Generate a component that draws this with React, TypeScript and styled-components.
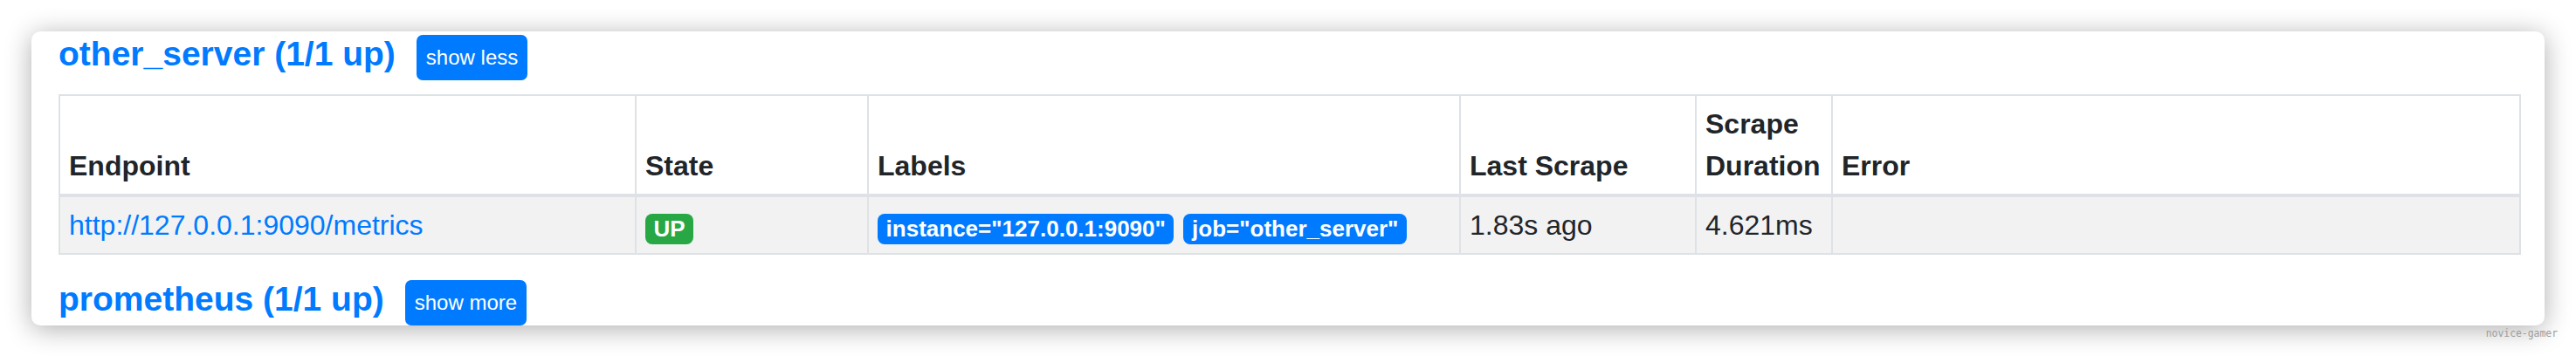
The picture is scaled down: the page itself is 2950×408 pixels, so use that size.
import React from 'react';
import styled, { createGlobalStyle } from 'styled-components';

type Target = {
  endpoint: string
  state: string
  labels: { [key: string]: string }
  lastScrape: string
  duration: string
  error: string
}

type Job = {
  name: string
  up: number
  total: number
  expanded: boolean
  targets: Target[]
}

const jobs: Job[] = [
  {
    name: 'other_server',
    up: 1,
    total: 1,
    expanded: true,
    targets: [
      {
        endpoint: 'http://127.0.0.1:9090/metrics',
        state: 'UP',
        labels: { instance: '127.0.0.1:9090', job: 'other_server' },
        lastScrape: '1.83s ago',
        duration: '4.621ms',
        error: '',
      },
    ],
  },
  { name: 'prometheus', up: 1, total: 1, expanded: false, targets: [] },
]

// column widths of the targets table, left to right
const columns = [
  { title: 'Endpoint', width: 660 },
  { title: 'State', width: 266 },
  { title: 'Labels', width: 678 },
  { title: 'Last Scrape', width: 270 },
  { title: 'Scrape Duration', width: 156 },
  { title: 'Error', width: 788 },
]

const GlobalStyle = createGlobalStyle`
  html, body {
    margin: 0;
    background: #fff;
  }
  body {
    font-family: "Liberation Sans", Arial, sans-serif;
  }
`

const Page = styled.div`
  width: 2950px;
  height: 408px;
  box-sizing: border-box;
  padding: 36px 36px 0;
  overflow: hidden;
`

const Card = styled.div`
  background: #fff;
  border-radius: 10px;
  box-shadow: 0 4px 30px rgba(0, 0, 0, 0.32);
  padding: 0 29px 0 31px;
  overflow: hidden;
`

const JobHeader = styled.div<{ $top: number }>`
  display: flex;
  align-items: flex-start;
  gap: 24px;
  margin-top: ${(p) => p.$top}px;
`

const JobTitle = styled.a`
  font-size: 39px;
  font-weight: 700;
  line-height: 52px;
  color: #007bff;
  text-decoration: none;
  white-space: nowrap;
`

const ToggleButton = styled.button`
  margin-top: 4px;
  height: 52px;
  padding: 0 11px;
  border: 0;
  border-radius: 7px;
  background: #007bff;
  color: #fff;
  font-family: inherit;
  font-size: 24px;
  line-height: 52px;
  cursor: pointer;
`

const Table = styled.table`
  width: 100%;
  margin-top: 16px;
  border-collapse: collapse;
  table-layout: fixed;
  color: #212529;
  font-size: 32px;
  line-height: 48px;
`

const Col = styled.col<{ $w: number }>`
  width: ${(p) => p.$w}px;
`

const Th = styled.th`
  text-align: left;
  vertical-align: bottom;
  padding: 8px 10px;
  border: 2px solid #dee2e6;
  border-bottom-width: 4px;
  font-weight: 700;
`

const Td = styled.td`
  vertical-align: top;
  padding: 8px 10px;
  border: 2px solid #dee2e6;
  background: #f2f2f2;
`

const Link = styled.a`
  color: #007bff;
  text-decoration: none;
`

const Badge = styled.span<{ $bg: string }>`
  display: inline-block;
  margin-right: 11px;
  padding: 4.5px 9.6px;
  border-radius: 8px;
  background: ${(p) => p.$bg};
  color: #fff;
  font-size: 26px;
  font-weight: 700;
  line-height: 1;
  white-space: nowrap;
  vertical-align: -2px;
`

const Watermark = styled.div`
  margin: 2px -15px 0 0;
  text-align: right;
  font-family: "DejaVu Sans Mono", monospace;
  font-size: 11.4px;
  line-height: 14px;
  color: #9c9c9c;
`

function TargetTable({ targets }: { targets: Target[] }) {
  return (
    <Table>
      <colgroup>
        {columns.map((c) => <Col key={c.title} $w={c.width} />)}
      </colgroup>
      <thead>
        <tr>
          {columns.map((c) => <Th key={c.title}>{c.title}</Th>)}
        </tr>
      </thead>
      <tbody>
        {targets.map((t) => (
          <tr key={t.endpoint}>
            <Td><Link href={t.endpoint}>{t.endpoint}</Link></Td>
            <Td><Badge $bg="#28a745">{t.state}</Badge></Td>
            <Td>
              {Object.entries(t.labels).map(([k, v]) => (
                <Badge key={k} $bg="#007bff">{`${k}="${v}"`}</Badge>
              ))}
            </Td>
            <Td>{t.lastScrape}</Td>
            <Td>{t.duration}</Td>
            <Td>{t.error}</Td>
          </tr>
        ))}
      </tbody>
    </Table>
  )
}

export default function App() {
  return (
    <>
      <GlobalStyle />
      <Page>
        <Card>
          {jobs.map((job, i) => (
            <React.Fragment key={job.name}>
              <JobHeader $top={i === 0 ? 0 : 25}>
                <JobTitle href={`#job-${job.name}`}>
                  {job.name} ({job.up}/{job.total} up)
                </JobTitle>
                <ToggleButton>{job.expanded ? 'show less' : 'show more'}</ToggleButton>
              </JobHeader>
              {job.expanded && <TargetTable targets={job.targets} />}
            </React.Fragment>
          ))}
        </Card>
        <Watermark>novice-gamer</Watermark>
      </Page>
    </>
  )
}
